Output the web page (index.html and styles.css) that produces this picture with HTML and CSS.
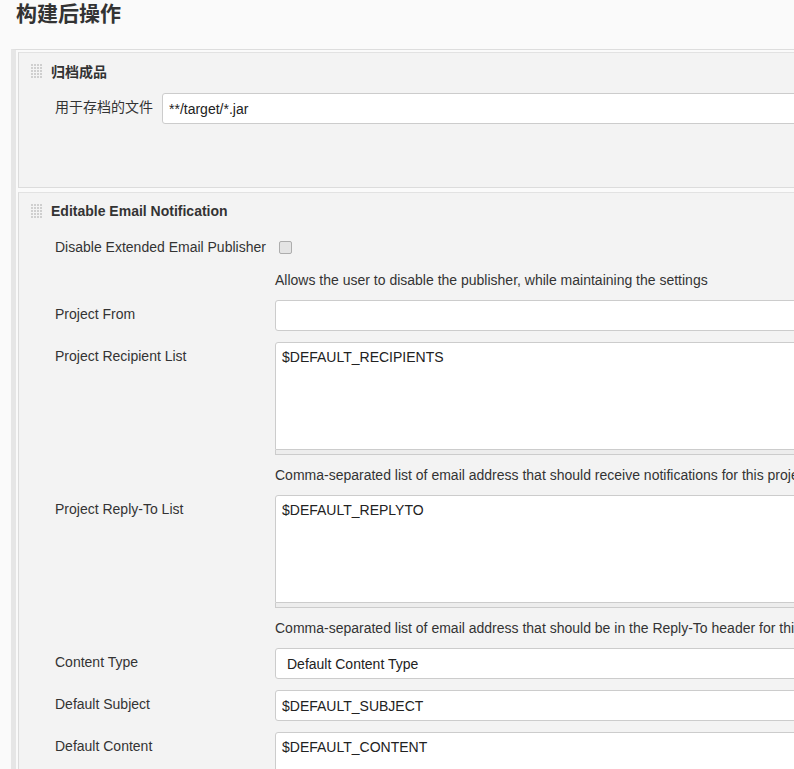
FILE: index.html
```html
<!DOCTYPE html>
<html lang="zh-CN">
<head>
    <meta charset="UTF-8">
    <meta name="viewport" content="width=device-width, initial-scale=1.0">
    <title>构建后操作</title>
    <link rel="stylesheet" href="styles.css">
</head>
<body>
    <div class="page">
        <h1>构建后操作</h1>
        <div class="sections">
            <div class="section archive">
                <div class="section-head">
                    <svg class="grip" width="11" height="15" viewBox="0 0 11 15">
                        <defs>
                            <pattern id="dots1" width="3" height="3" patternUnits="userSpaceOnUse">
                                <rect width="2" height="2" fill="#cfcfcf"/>
                            </pattern>
                        </defs>
                        <rect width="11" height="15" fill="url(#dots1)"/>
                    </svg>
                    <span>归档成品</span>
                </div>
                <div class="row">
                    <div class="label label-short">用于存档的文件</div>
                    <div class="field"><input class="text" type="text" value="**/target/*.jar"></div>
                </div>
            </div>
            <div class="section">
                <div class="section-head">
                    <svg class="grip" width="11" height="15" viewBox="0 0 11 15">
                        <defs>
                            <pattern id="dots2" width="3" height="3" patternUnits="userSpaceOnUse">
                                <rect width="2" height="2" fill="#cfcfcf"/>
                            </pattern>
                        </defs>
                        <rect width="11" height="15" fill="url(#dots2)"/>
                    </svg>
                    <span>Editable Email Notification</span>
                </div>
                <div class="row row-check">
                    <div class="label">Disable Extended Email Publisher</div>
                    <div class="field"><input class="check" type="checkbox"></div>
                </div>
                <div class="row help">
                    <div class="label"></div>
                    <div class="field">Allows the user to disable the publisher, while maintaining the settings</div>
                </div>
                <div class="row">
                    <div class="label">Project From</div>
                    <div class="field"><input class="text" type="text" value=""></div>
                </div>
                <div class="row">
                    <div class="label">Project Recipient List</div>
                    <div class="field">
                        <textarea class="area">$DEFAULT_RECIPIENTS</textarea>
                        <div class="handle"></div>
                    </div>
                </div>
                <div class="row help">
                    <div class="label"></div>
                    <div class="field">Comma-separated list of email address that should receive notifications for this project.</div>
                </div>
                <div class="row">
                    <div class="label">Project Reply-To List</div>
                    <div class="field">
                        <textarea class="area">$DEFAULT_REPLYTO</textarea>
                        <div class="handle"></div>
                    </div>
                </div>
                <div class="row help">
                    <div class="label"></div>
                    <div class="field">Comma-separated list of email address that should be in the Reply-To header for this project.</div>
                </div>
                <div class="row">
                    <div class="label">Content Type</div>
                    <div class="field">
                        <select class="select">
                            <option>Default Content Type</option>
                            <option>HTML (text/html)</option>
                            <option>Plain Text (text/plain)</option>
                        </select>
                    </div>
                </div>
                <div class="row">
                    <div class="label">Default Subject</div>
                    <div class="field"><input class="text" type="text" value="$DEFAULT_SUBJECT"></div>
                </div>
                <div class="row">
                    <div class="label">Default Content</div>
                    <div class="field">
                        <textarea class="area">$DEFAULT_CONTENT</textarea>
                        <div class="handle"></div>
                    </div>
                </div>
            </div>
        </div>
    </div>
</body>
</html>
```

FILE: styles.css
```css
body {
    margin: 0;
    background-color: #fafafa;
    font-family: "Liberation Sans", Arial, "Noto Sans CJK SC", sans-serif;
    font-size: 14px;
    color: #333;
    overflow: hidden;
}
.page {
    width: 920px;
}
h1 {
    margin: 0;
    padding-left: 16px;
    font-size: 21px;
    line-height: 27px;
    font-weight: bold;
    color: #333;
}
.sections {
    margin: 22px 0 0 11px;
    border-top: 1px solid #ddd;
    border-left: 5px solid #e6e6e6;
    padding-left: 2px;
}
.section {
    margin-top: 2px;
    background-color: #f3f3f3;
    border-top: 1px solid #e2e2e2;
    border-bottom: 1px solid #dcdcdc;
    border-left: 1px solid #dcdcdc;
}
.section + .section {
    margin-top: 4px;
}
.archive {
    padding-bottom: 63px;
}
.section-head {
    display: flex;
    align-items: center;
    height: 36px;
    padding-left: 12px;
    font-weight: bold;
    color: #333;
}
.grip {
    display: block;
    margin-right: 9px;
}
.row {
    display: flex;
    margin-top: 11px;
    padding-left: 36px;
}
.section-head + .row {
    margin-top: 4px;
}
.label {
    flex-shrink: 0;
    width: 220px;
    padding-top: 5px;
    line-height: 18px;
}
.label-short {
    width: 107px;
}
.field {
    flex: 1;
    min-width: 0;
}
.help .label {
    padding-top: 0;
}
.help .field {
    line-height: 18px;
    white-space: nowrap;
}
.row-check {
    height: 27px;
}
.check {
    appearance: none;
    display: block;
    width: 13px;
    height: 13px;
    margin: 8px 0 0 4px;
    border: 1px solid #adadad;
    border-radius: 2px;
    background-color: #e4e4e4;
}
.text,
.select {
    display: block;
    box-sizing: border-box;
    width: 100%;
    height: 31px;
    padding: 0 6px;
    border: 1px solid #ccc;
    border-radius: 3px;
    background-color: #fff;
    font-family: inherit;
    font-size: 14px;
    color: #222;
    outline: none;
}
.select {
    appearance: none;
    padding-left: 11px;
}
.area {
    display: block;
    box-sizing: border-box;
    width: 100%;
    height: 108px;
    padding: 6px;
    border: 1px solid #ccc;
    border-radius: 3px 3px 0 0;
    background-color: #fff;
    font-family: inherit;
    font-size: 14px;
    line-height: 17px;
    color: #222;
    resize: none;
    outline: none;
}
.handle {
    height: 4px;
    border: 1px solid #ccc;
    border-top: none;
    background-color: #ededed;
}
```
